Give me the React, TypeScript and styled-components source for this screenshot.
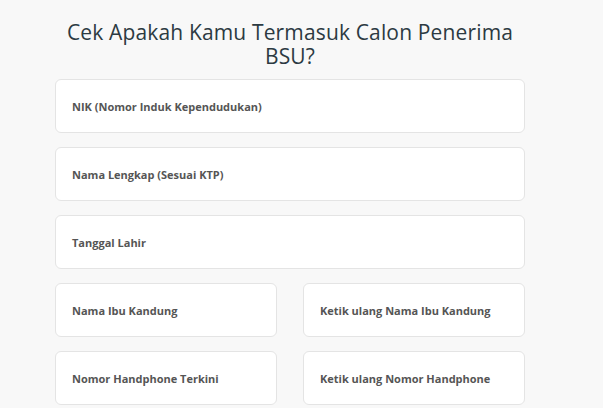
import styled, { createGlobalStyle } from 'styled-components';

const GlobalStyle = createGlobalStyle`
  html, body {
    margin: 0;
    padding: 0;
    background: #f8f8f8;
  }
`;

const fields: { label: string }[][] = [
  [{ label: 'NIK (Nomor Induk Kependudukan)' }],
  [{ label: 'Nama Lengkap (Sesuai KTP)' }],
  [{ label: 'Tanggal Lahir' }],
  [{ label: 'Nama Ibu Kandung' }, { label: 'Ketik ulang Nama Ibu Kandung' }],
  [{ label: 'Nomor Handphone Terkini' }, { label: 'Ketik ulang Nomor Handphone' }],
];

const App = () => {
  return (
    <>
      <GlobalStyle />
      <Wrapper>
        <Title>Cek Apakah Kamu Termasuk Calon Penerima BSU?</Title>
        <Form>
          {fields.map((row, i) => (
            <Row key={i} cols={row.length}>
              {row.map((f) => (
                <Field key={f.label}>
                  <Label>{f.label}</Label>
                </Field>
              ))}
            </Row>
          ))}
        </Form>
      </Wrapper>
    </>
  );
};

const Wrapper = styled.div`
  width: 470px;
  margin-left: 55px;
  padding-top: 20px;
  display: flex;
  flex-direction: column;
`;

const Title = styled.h1`
  margin: 0 0 11px;
  font-family: 'Open Sans', sans-serif;
  font-weight: 400;
  font-size: 21px;
  line-height: 24px;
  letter-spacing: 0.15px;
  text-align: center;
  color: #2c3a42;
`;

const Form = styled.div`
  display: flex;
  flex-direction: column;
  gap: 14px;
`;

const Row = styled.div<{ cols: number }>`
  display: grid;
  grid-template-columns: repeat(${(p) => p.cols}, 1fr);
  column-gap: 26px;
`;

const Field = styled.div`
  height: 54px;
  box-sizing: border-box;
  display: flex;
  align-items: center;
  padding: 0 16px;
  background: #ffffff;
  border: 1px solid #e4e4e4;
  border-radius: 6px;
`;

const Label = styled.span`
  font-family: 'Open Sans', sans-serif;
  font-weight: 700;
  font-size: 11px;
  color: #555555;
`;

export default App;
